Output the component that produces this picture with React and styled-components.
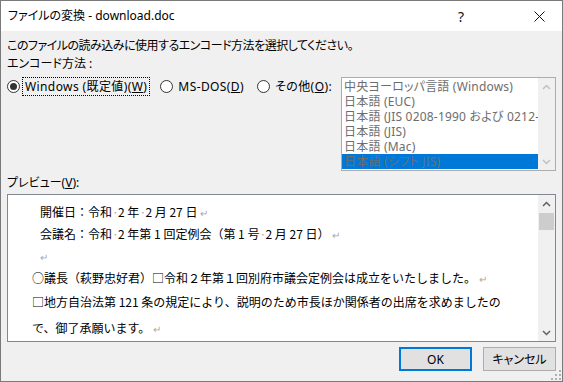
import React from 'react';
import styled, { createGlobalStyle } from 'styled-components';

const Global = createGlobalStyle`
  html, body { margin: 0; padding: 0; background: #fff; }
  body { width: 563px; height: 382px; overflow: hidden; }
`;

const UI_FONT = `"Noto Sans", "Noto Sans CJK JP", sans-serif`;

const Window = styled.div`
  position: relative;
  box-sizing: border-box;
  width: 563px;
  height: 382px;
  border: 1px solid #7a7a7a;
  display: flex;
  flex-direction: column;
  background: #f0f0f0;
  font-family: ${UI_FONT};
  font-size: 12px;
  color: #000;
  font-feature-settings: "palt";
`;

const TitleBar = styled.div`
  height: 30px;
  background: #fff;
  display: flex;
  align-items: center;
  padding-left: 7px;
`;

const Title = styled.div`
  flex: 1;
  line-height: 16px;
  white-space: nowrap;
`;

const CaptionButton = styled.div`
  width: 46px;
  height: 30px;
  display: flex;
  align-items: center;
  justify-content: center;
  margin-right: ${p => p.$gap || 0}px;
  font-size: 14px;
  color: #111;
`;

const Body = styled.div`
  flex: 1;
  display: flex;
  flex-direction: column;
  padding: 7px 6px 0 6px;
`;

const Text = styled.div`
  line-height: 16px;
  margin-top: ${p => p.$mt || 0}px;
  letter-spacing: ${p => p.$ls || 0}px;
  white-space: nowrap;
`;

const EncodingRow = styled.div`
  margin-top: 5px;
  display: flex;
  justify-content: space-between;
  align-items: flex-start;
`;

const RadioGroup = styled.div`
  display: flex;
  align-items: center;
  gap: 10px;
  height: 19px;
`;

const RadioOption = styled.label`
  display: flex;
  align-items: center;
  gap: 2px;
`;

const RadioCircle = styled.span`
  box-sizing: border-box;
  width: 13px;
  height: 13px;
  border-radius: 50%;
  border: 1px solid #333;
  background: #fff;
  display: inline-flex;
  align-items: center;
  justify-content: center;
  flex-shrink: 0;
  &::after {
    content: '';
    width: 7px;
    height: 7px;
    border-radius: 50%;
    background: ${p => (p.$checked ? '#333' : 'transparent')};
  }
`;

const RadioLabel = styled.span`
  box-sizing: border-box;
  height: 19px;
  line-height: 17px;
  padding: 0 2px;
  letter-spacing: 0.4px;
  border: 1px dotted ${p => (p.$focused ? '#000' : 'transparent')};
  white-space: nowrap;
`;

const ListBox = styled.div`
  box-sizing: border-box;
  width: 215px;
  height: 94px;
  border: 1px solid #adadad;
  background: #fff;
  display: flex;
`;

const ListItems = styled.div`
  flex: 1;
  min-width: 0;
  padding-top: 1px;
  display: flex;
  flex-direction: column;
`;

const ListItem = styled.div`
  height: 15px;
  line-height: 15px;
  padding-left: 2px;
  letter-spacing: 0.2px;
  white-space: nowrap;
  overflow: hidden;
  color: #6d6d6d;
  background: ${p => (p.$selected ? '#0078d7' : 'transparent')};
`;

const ScrollBar = styled.div`
  width: 17px;
  flex-shrink: 0;
  background: #f0f0f0;
  display: flex;
  flex-direction: column;
  align-items: stretch;
`;

const ArrowCell = styled.div`
  height: 17px;
  display: flex;
  align-items: center;
  justify-content: center;
`;

const Track = styled.div`
  flex: 1;
  display: flex;
  flex-direction: column;
`;

const Thumb = styled.div`
  height: 17px;
  background: #cdcdcd;
  margin: 1px 1px 0 1px;
`;

const Preview = styled.div`
  box-sizing: border-box;
  margin-top: 3px;
  height: 148px;
  border: 1px solid #828790;
  background: #fff;
  display: flex;
`;

const PreviewContent = styled.div`
  flex: 1;
  padding: 6px 0 0 24px;
  font-family: "Noto Sans CJK JP", sans-serif;
  font-feature-settings: normal;
  font-size: 12px;
  overflow: hidden;
`;

const PLine = styled.div`
  height: ${p => p.$h}px;
  line-height: ${p => p.$h}px;
  padding-left: ${p => p.$indent || 0}px;
  white-space: nowrap;
`;

const Mark = styled.span`
  color: #a8a8a8;
  font-size: 10px;
  margin-left: ${p => (p.$flush ? 0 : 3)}px;
`;

const Dot = styled.span`
  display: inline-block;
  width: 6px;
  text-align: center;
  color: #a8a8a8;
`;

const ButtonRow = styled.div`
  margin-top: 5px;
  display: flex;
  justify-content: flex-end;
  gap: 11px;
`;

const Button = styled.div`
  box-sizing: border-box;
  width: 73px;
  height: 24px;
  display: flex;
  align-items: center;
  justify-content: center;
  background: #e1e1e1;
  border: ${p => (p.$default ? '2px solid #0078d7' : '1px solid #adadad')};
`;

const Grip = styled.svg`
  position: absolute;
  right: 1px;
  bottom: 1px;
`;

const Chevron = ({ up, color }) => (
  <svg width="9" height="6" viewBox="0 0 9 6">
    <polyline
      points={up ? '1,5 4.5,1.5 8,5' : '1,1 4.5,4.5 8,1'}
      fill="none"
      stroke={color}
      strokeWidth="1.5"
    />
  </svg>
);

const CloseIcon = () => (
  <svg width="11" height="11" viewBox="0 0 11 11">
    <path d="M0.5 0.5 L10.5 10.5 M10.5 0.5 L0.5 10.5" stroke="#111" strokeWidth="1" />
  </svg>
);

const listItems = [
  '中央ヨーロッパ言語 (Windows)',
  '日本語 (EUC)',
  '日本語 (JIS 0208-1990 および 0212-1990)',
  '日本語 (JIS)',
  '日本語 (Mac)',
  '日本語 (シフト JIS)',
];

export default function App() {
  return (
    <>
      <Global />
      <Window>
        <TitleBar>
          <Title>ファイルの変換 - download.doc</Title>
          <CaptionButton $gap={32}>?</CaptionButton>
          <CaptionButton>
            <CloseIcon />
          </CaptionButton>
        </TitleBar>
        <Body>
          <Text $ls={-0.5}>このファイルの読み込みに使用するエンコード方法を選択してください。</Text>
          <Text $mt={2}>エンコード方法 :</Text>
          <EncodingRow>
            <RadioGroup>
              <RadioOption>
                <RadioCircle $checked />
                <RadioLabel $focused>
                  Windows (既定値)(<u>W</u>)
                </RadioLabel>
              </RadioOption>
              <RadioOption>
                <RadioCircle />
                <RadioLabel>
                  MS-DOS(<u>D</u>)
                </RadioLabel>
              </RadioOption>
              <RadioOption>
                <RadioCircle />
                <RadioLabel>
                  その他(<u>O</u>):
                </RadioLabel>
              </RadioOption>
            </RadioGroup>
            <ListBox>
              <ListItems>
                {listItems.map((t, i) => (
                  <ListItem key={t} $selected={i === listItems.length - 1}>
                    {t}
                  </ListItem>
                ))}
              </ListItems>
              <ScrollBar>
                <ArrowCell>
                  <Chevron up color="#c0c0c0" />
                </ArrowCell>
                <Track />
                <ArrowCell>
                  <Chevron color="#c0c0c0" />
                </ArrowCell>
              </ScrollBar>
            </ListBox>
          </EncodingRow>
          <Text $mt={4}>
            プレビュー(<u>V</u>):
          </Text>
          <Preview>
            <PreviewContent>
              <PLine $h={22} $indent={8}>
                開催日：令和<Dot>·</Dot>2 年<Dot>·</Dot>2 月 27 日<Mark>↵</Mark>
              </PLine>
              <PLine $h={22} $indent={8}>
                会議名：令和<Dot>·</Dot>2 年第 1 回定例会（第 1 号<Dot>·</Dot>2 月 27 日）<Mark>↵</Mark>
              </PLine>
              <PLine $h={22} $indent={8}>
                <Mark $flush>↵</Mark>
              </PLine>
              <PLine $h={22}>
                ○議長（萩野忠好君）□令和２年第１回別府市議会定例会は成立をいたしました。<Mark>↵</Mark>
              </PLine>
              <PLine $h={26}>
                □地方自治法第 121 条の規定により、説明のため市長ほか関係者の出席を求めましたの
              </PLine>
              <PLine $h={25}>
                で、御了承願います。<Mark>↵</Mark>
              </PLine>
            </PreviewContent>
            <ScrollBar>
              <ArrowCell>
                <Chevron up color="#606060" />
              </ArrowCell>
              <Track>
                <Thumb />
              </Track>
              <ArrowCell>
                <Chevron color="#606060" />
              </ArrowCell>
            </ScrollBar>
          </Preview>
          <ButtonRow>
            <Button $default>OK</Button>
            <Button>キャンセル</Button>
          </ButtonRow>
        </Body>
        <Grip width="11" height="11" viewBox="0 0 11 11">
          <g fill="#b0b0b0">
            <rect x="9" y="1" width="2" height="2" />
            <rect x="5" y="5" width="2" height="2" />
            <rect x="9" y="5" width="2" height="2" />
            <rect x="1" y="9" width="2" height="2" />
            <rect x="5" y="9" width="2" height="2" />
            <rect x="9" y="9" width="2" height="2" />
          </g>
        </Grip>
      </Window>
    </>
  );
}
